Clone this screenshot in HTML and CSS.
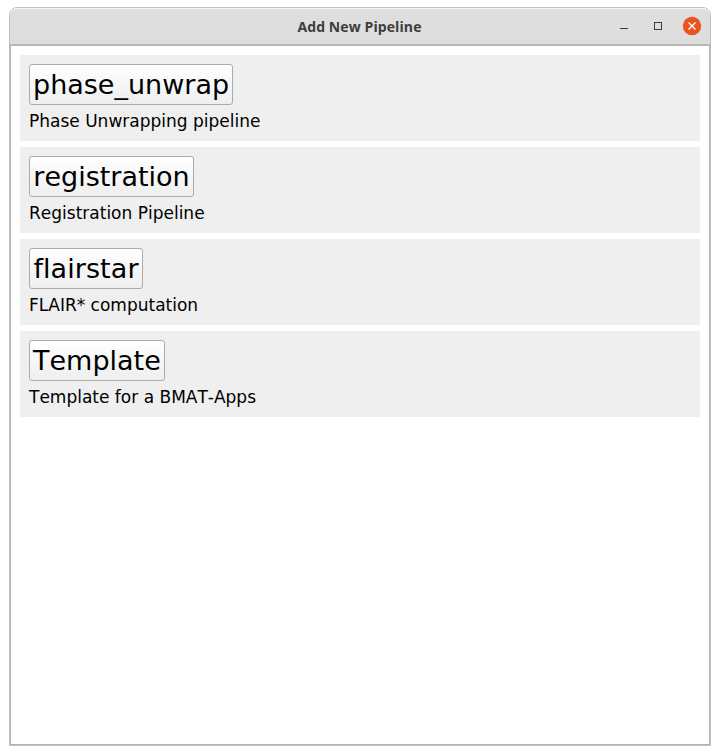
FILE: index.html
```html
<!DOCTYPE html>
<html lang="en">
<head>
<meta charset="utf-8">
<title>Add New Pipeline</title>
<link rel="stylesheet" href="styles.css">
</head>
<body>
<div class="window">
  <header class="titlebar">
    <h1 class="title">Add New Pipeline</h1>
    <div class="controls">
      <svg width="18" height="20" viewBox="0 0 18 20"><path d="M5 12.5h8" stroke="#3d3d3d"/></svg>
      <svg width="18" height="20" viewBox="0 0 18 20"><rect x="5.5" y="6.5" width="7" height="7" fill="none" stroke="#3d3d3d"/></svg>
      <svg width="18" height="20" viewBox="0 0 18 20"><circle cx="9" cy="10" r="9.2" fill="#e95420"/><path d="M5.5 6.5l7 7M12.5 6.5l-7 7" stroke="#fff" stroke-width="1.3"/></svg>
    </div>
  </header>
  <main class="list">
    <section class="item"><button class="name">phase_unwrap</button><p class="desc">Phase Unwrapping pipeline</p></section>
    <section class="item"><button class="name name-registration">registration</button><p class="desc">Registration Pipeline</p></section>
    <section class="item"><button class="name name-flairstar">flairstar</button><p class="desc">FLAIR* computation</p></section>
    <section class="item"><button class="name">Template</button><p class="desc">Template for a BMAT-Apps</p></section>
  </main>
</div>
</body>
</html>
```
FILE: styles.css
```css
* { box-sizing: border-box; }
body { margin: 0; padding: 7px 9px 9px; height: 755px; background: #fff; }
.window {
  height: 739px;
  display: flex;
  flex-direction: column;
  border: 1px solid #c0c0c0;
  border-radius: 8px 8px 0 0;
  background: #fff;
}
.titlebar {
  height: 38px;
  flex: none;
  display: grid;
  grid-template-columns: 1fr auto 1fr;
  align-items: center;
  border-top: 1px solid #f4f4f4;
  border-bottom: 2px solid #b6b6b6;
  border-radius: 7px 7px 0 0;
  background: #dedede;
}
.title {
  grid-column: 2;
  margin: 0 1px 0 0;
  font: bold 14px/20px "Open Sans", "Noto Sans", sans-serif;
  letter-spacing: 0.1px;
  color: #3d3d3d;
  white-space: nowrap;
}
.controls { display: flex; justify-content: flex-end; gap: 16px; padding: 0 9px 2px 0; }
.controls svg { display: block; overflow: visible; }
.list {
  flex: 1;
  display: flex;
  flex-direction: column;
  gap: 6px;
  padding: 9px;
  border: 1px solid #b4b4b4;
  border-top: 0;
}
.item {
  height: 86px;
  padding: 9px;
  display: flex;
  flex-direction: column;
  align-items: flex-start;
  background: #efefef;
  font-family: "DejaVu Sans", sans-serif;
  font-kerning: none;
  font-variant-ligatures: none;
  color: #000;
}
.name {
  height: 41px;
  padding: 0 3px;
  border: 1px solid #ababab;
  border-radius: 3px;
  background: linear-gradient(#fff, #eee);
  font: 27px/39px "DejaVu Sans", sans-serif;
  font-kerning: none;
  font-variant-ligatures: none;
  color: #000;
}
.name-registration { width: 165px; }
.name-flairstar { width: 114px; letter-spacing: 0.08px; }
.desc { margin: 6px 0 0; font-size: 17px; line-height: 20px; }
```
